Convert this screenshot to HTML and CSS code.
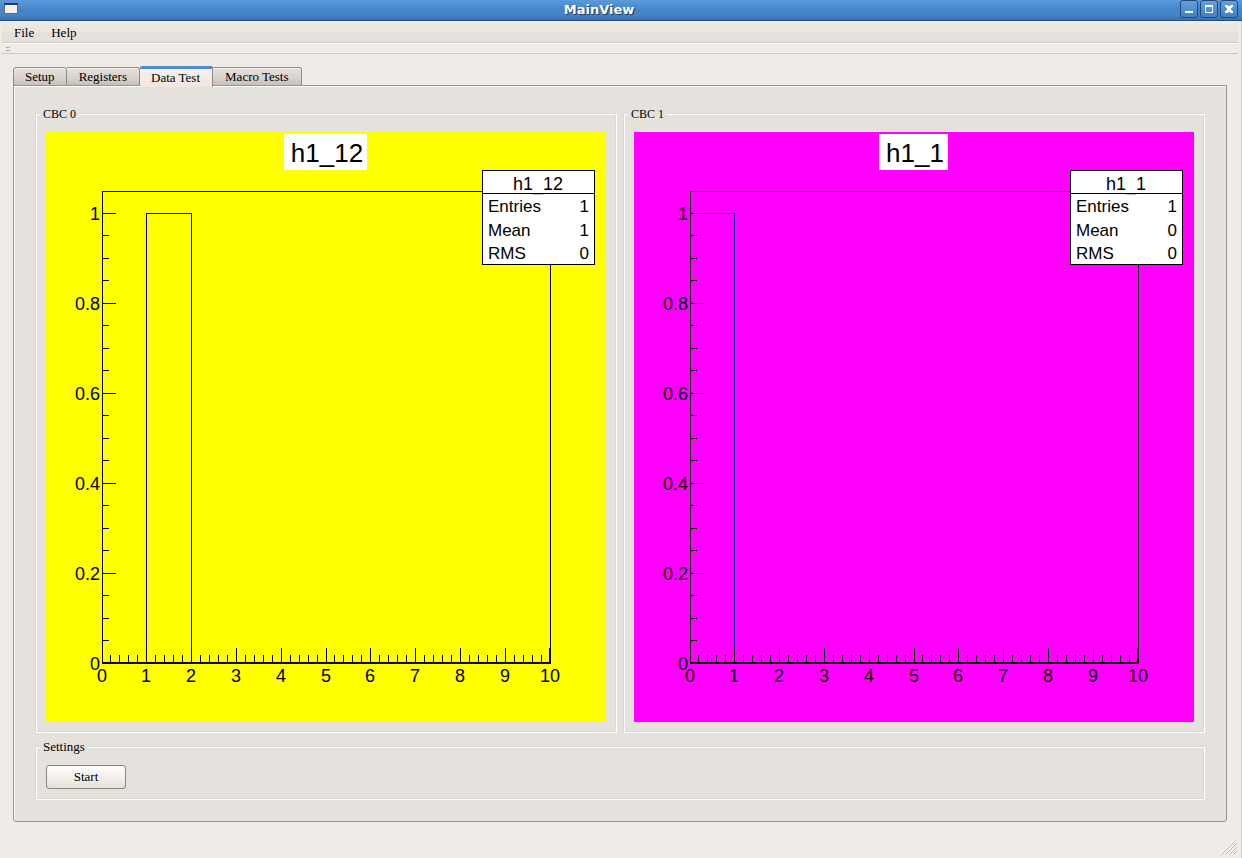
FILE: index.html
```html
<!DOCTYPE html>
<html lang="en">
<head>
<meta charset="utf-8">
<title>MainView</title>
<link rel="stylesheet" href="styles.css">
</head>
<body>
<div class="window">
  <header class="titlebar">
    <svg class="app-icon" width="14" height="11" viewBox="0 0 14 11" shape-rendering="crispEdges" aria-hidden="true">
      <rect width="14" height="11" fill="#6b6b6b"/><rect width="14" height="2" fill="#23415f"/>
      <rect x="1" y="2" width="12" height="8" fill="#f3f1f0"/>
    </svg>
    <h1 class="title">MainView</h1>
    <div class="window-buttons">
      <button class="window-button" type="button" aria-label="Minimize"><svg width="16" height="16" viewBox="0 0 16 16" shape-rendering="crispEdges"><path d="M4 10h8v2H4z" fill="#fff"/></svg></button>
      <button class="window-button" type="button" aria-label="Maximize"><svg width="16" height="16" viewBox="0 0 16 16" shape-rendering="crispEdges"><path d="M4 4h8v8H4zM5 6v5h6V6z" fill="#fff" fill-rule="evenodd"/></svg></button>
      <button class="window-button" type="button" aria-label="Close"><svg width="16" height="16" viewBox="0 0 16 16" shape-rendering="crispEdges"><path d="M4 4h3v1h2V4h3v2h-1v1h-1v2h1v1h1v2H9v-1H7v1H4v-2h1V9h1V7H5V6H4z" fill="#fff"/></svg></button>
    </div>
  </header>

  <nav class="menubar">
    <button class="menu" type="button">File</button>
    <button class="menu" type="button">Help</button>
  </nav>
  <div class="toolbar"><span class="handle"></span></div>

  <main class="content">
    <div class="tabs" role="tablist">
      <button class="tab" type="button" role="tab">Setup</button>
      <button class="tab" type="button" role="tab">Registers</button>
      <button class="tab tab-active" type="button" role="tab" aria-selected="true">Data Test</button>
      <button class="tab" type="button" role="tab">Macro Tests</button>
    </div>
    <section class="pane" role="tabpanel">
      <div class="charts">
        <fieldset class="group">
          <legend class="legend legend-small">CBC 0</legend>
          <svg class="chart chart-yellow" viewBox="0 0 560 590" role="img" aria-label="Histogram h1_12">
            <defs>
              <g id="axes">
                <path class="line" d="M56.5 531V59.5H504.5V531M56 530.5H505"/>
                <path class="line" d="M56 81.500h14M56 171.500h14M56 261.500h14M56 351.500h14M56 441.500h14M56 103.500h7M56 126.500h7M56 148.500h7M56 193.500h7M56 216.500h7M56 238.500h7M56 283.500h7M56 306.500h7M56 328.500h7M56 373.500h7M56 396.500h7M56 418.500h7M56 463.500h7M56 486.500h7M56 508.500h7"/>
                <path class="line" d="M100.500 516v15M145.500 516v15M190.500 516v15M235.500 516v15M280.500 516v15M324.500 516v15M369.500 516v15M414.500 516v15M459.500 516v15M503.500 516v15"/>
                <path class="line" d="M64.500 523v8M73.500 523v8M82.500 523v8M91.500 523v8M109.500 523v8M118.500 523v8M127.500 523v8M136.500 523v8M154.500 523v8M163.500 523v8M172.500 523v8M181.500 523v8M199.500 523v8M208.500 523v8M217.500 523v8M226.500 523v8M244.500 523v8M253.500 523v8M262.500 523v8M271.500 523v8M288.500 523v8M297.500 523v8M306.500 523v8M315.500 523v8M333.500 523v8M342.500 523v8M351.500 523v8M360.500 523v8M378.500 523v8M387.500 523v8M396.500 523v8M405.500 523v8M423.500 523v8M432.500 523v8M441.500 523v8M450.500 523v8M468.500 523v8M477.500 523v8M486.500 523v8M495.500 523v8"/>
                <g class="label label-end">
                  <text x="54" y="88">1</text><text x="54" y="178">0.8</text><text x="54" y="268">0.6</text><text x="54" y="358">0.4</text><text x="54" y="448">0.2</text><text x="54" y="538">0</text>
                </g>
                <g class="label label-middle">
                  <text x="56" y="550">0</text><text x="100" y="550">1</text><text x="145" y="550">2</text><text x="190" y="550">3</text><text x="235" y="550">4</text><text x="280" y="550">5</text><text x="324" y="550">6</text><text x="369" y="550">7</text><text x="414" y="550">8</text><text x="459" y="550">9</text><text x="504" y="550">10</text>
                </g>
                <path class="box" d="M436.500 38.500h112v94h-112zM436.500 61.500h112"/>
                <g class="stat">
                  <text x="442" y="80">Entries</text><text x="442" y="104">Mean</text><text x="442" y="127">RMS</text>
                </g>
              </g>
            </defs>
            <path class="data" d="M56 531.500H505M100.500 531V81.500H145.500V531"/>
            <use href="#axes"/>
            <path class="line" d="M100 531.500H146"/>
            <rect x="238" y="2" width="83" height="36" fill="#fff"/>
            <text class="heading label-middle" x="281" y="30">h1_12</text>
            <text class="label label-middle" x="492" y="58">h1_12</text>
            <g class="stat label-end"><text x="543" y="80">1</text><text x="543" y="104">1</text><text x="543" y="127">0</text></g>
          </svg>
        </fieldset>
        <fieldset class="group">
          <legend class="legend legend-small">CBC 1</legend>
          <svg class="chart chart-magenta" viewBox="0 0 560 590" role="img" aria-label="Histogram h1_1">
            <path class="data" d="M56 531.500H505M56.500 531V81.500H100.500V531"/>
            <use href="#axes"/>
            <path class="line" d="M56 531.500H101"/>
            <rect x="245" y="2" width="69" height="36" fill="#fff"/>
            <text class="heading label-middle" x="281" y="30">h1_1</text>
            <text class="label label-middle" x="492" y="58">h1_1</text>
            <g class="stat label-end"><text x="543" y="80">1</text><text x="543" y="104">0</text><text x="543" y="127">0</text></g>
          </svg>
        </fieldset>
      </div>
      <fieldset class="group group-settings">
        <legend class="legend">Settings</legend>
        <button class="push" type="button">Start</button>
      </fieldset>
    </section>
  </main>

  <footer class="statusbar">
    <svg width="18" height="18" viewBox="0 0 18 18" aria-hidden="true">
      <path d="M1 17L17 1M5 17L17 5M9 17L17 9M13 17L17 13" stroke="#b8b4ac" fill="none"/>
      <path d="M0 17L17 0M4 17L17 4M8 17L17 8M12 17L17 12" stroke="#fff" fill="none" stroke-width="1"/>
    </svg>
  </footer>
</div>
</body>
</html>
```

FILE: styles.css
```css
* { box-sizing: border-box; }

body {
  margin: 0;
  background: #efece7;
  color: #000;
  font: 13px/16px "Liberation Serif", serif;
}

button {
  font: inherit;
  color: inherit;
}

.window {
  display: flex;
  flex-direction: column;
  min-height: 100vh;
  border-right: 1px solid #cfccc7;
}

/* Title bar */
.titlebar {
  display: grid;
  grid-template-columns: auto 1fr auto;
  align-items: start;
  height: 21px;
  margin-right: -1px;
  padding: 0 4px;
  border-bottom: 1px solid #2b4d73;
  background: linear-gradient(#5b9bdb, #4484c8 50%, #4684c6 75%, #3a70aa);
}

.title {
  margin: 0;
  color: #fff;
  text-align: center;
  font: bold 13px/20px "DejaVu Sans", sans-serif;
  text-shadow: 1px 1px 1px #1d3550;
}

.app-icon { margin-top: 3px; }

.window-buttons {
  display: flex;
  justify-content: flex-end;
  gap: 2px;
}

.window-button {
  width: 18px;
  height: 18px;
  padding: 0;
  border: 1px solid #234a75;
  border-radius: 3px;
  background: linear-gradient(#65a0df, #4080c4);
}

.window-button svg { display: block; }

/* Menu and toolbar */
.menubar {
  display: flex;
  height: 22px;
  margin: 0 3px 0 2px;
  padding: 0 4px;
  border-bottom: 1px solid #d5cac6;
  background: linear-gradient(#efebe7, #efe6e2 25%, #efe5dc 50%, #e5e2dd 51%, #e5e0dc);
}

.menu {
  padding: 2px 8px 0;
  border: 0;
  background: none;
}

.menu + .menu { margin-left: 1px; }

.toolbar {
  display: flex;
  align-items: center;
  height: 11px;
  margin: 0 3px 0 2px;
  padding: 0 4px;
  border-top: 1px solid #fff;
  border-bottom: 1px solid #cac7c1;
}

.handle {
  width: 4px;
  height: 4px;
  border: solid #b0aca7;
  border-width: 1px 0;
}

/* Tabs */
.content {
  flex: 1;
  display: flex;
  flex-direction: column;
  padding: 12px 14px 0 13px;
}

.tabs {
  display: flex;
  align-items: flex-end;
}

.tab {
  height: 19px;
  padding: 1px 12px 0;
  border: 1px solid #8e8b84;
  border-left-width: 0;
  border-radius: 0 3px 0 0;
  background: linear-gradient(#e6e1dc, #d9d1ca 60%, #c9bfb8);
  box-shadow: inset 0 1px #f5f2ef;
}

.tab:first-child {
  padding: 1px 11px 0;
  border-left-width: 1px;
  border-radius: 3px 3px 0 0;
}

.tab-active {
  height: 21px;
  margin-bottom: -1px;
  padding: 0 12px 0 11px;
  border-top: 3px solid #4d8cca;
  border-bottom: 0;
  border-radius: 2px 2px 0 0;
  background: linear-gradient(#f6efec, #f1e7e0);
  box-shadow: none;
  z-index: 1;
}

.pane {
  flex: 1;
  margin-top: -1px;
  padding: 20px 21px 21px 22px;
  border: 1px solid #98958c;
  border-radius: 0 0 3px 3px;
  background: #e5e2dd;
  box-shadow: inset 1px 1px #fff;
}

/* Groups */
.charts {
  display: grid;
  grid-template-columns: 1fr 1fr;
  gap: 7px;
}

.group {
  min-width: 0;
  margin: 0;
  padding: 10px 10px 10px 9px;
  border: 1px solid #fff;
  box-shadow: -1px -1px #dbd8d3, inset -1px -1px #dbd8d3;
}

.group-settings { margin-top: 6px; }

.legend {
  margin-left: -6px;
  padding: 0 3px;
  background: #e5e2dd;
}

.legend-small { font-size: 12px; }

.push {
  display: block;
  width: 80px;
  height: 24px;
  padding: 0;
  border: 1px solid #89867a;
  border-radius: 3px;
  background: linear-gradient(#fff, #f5efed 45%, #f4ebe5 60%, #ece9e5 75%, #e3dfd9);
}

/* Histograms */
.chart {
  display: block;
  width: 100%;
  font-family: "Liberation Sans", sans-serif;
}

.chart-yellow { background: #ff0; }
.chart-magenta { background: #f0f; }

.line, .data, .box {
  fill: none;
  stroke: #000;
  shape-rendering: crispEdges;
}

.data { stroke: #000099; }
.box { fill: #fff; }
.label { font-size: 18px; }
.stat { font-size: 17px; }
.heading { font-size: 26px; }
.label-end { text-anchor: end; }
.label-middle { text-anchor: middle; }

.statusbar {
  display: flex;
  align-items: flex-end;
  justify-content: flex-end;
  height: 36px;
  padding: 0 3px 2px;
}
```
